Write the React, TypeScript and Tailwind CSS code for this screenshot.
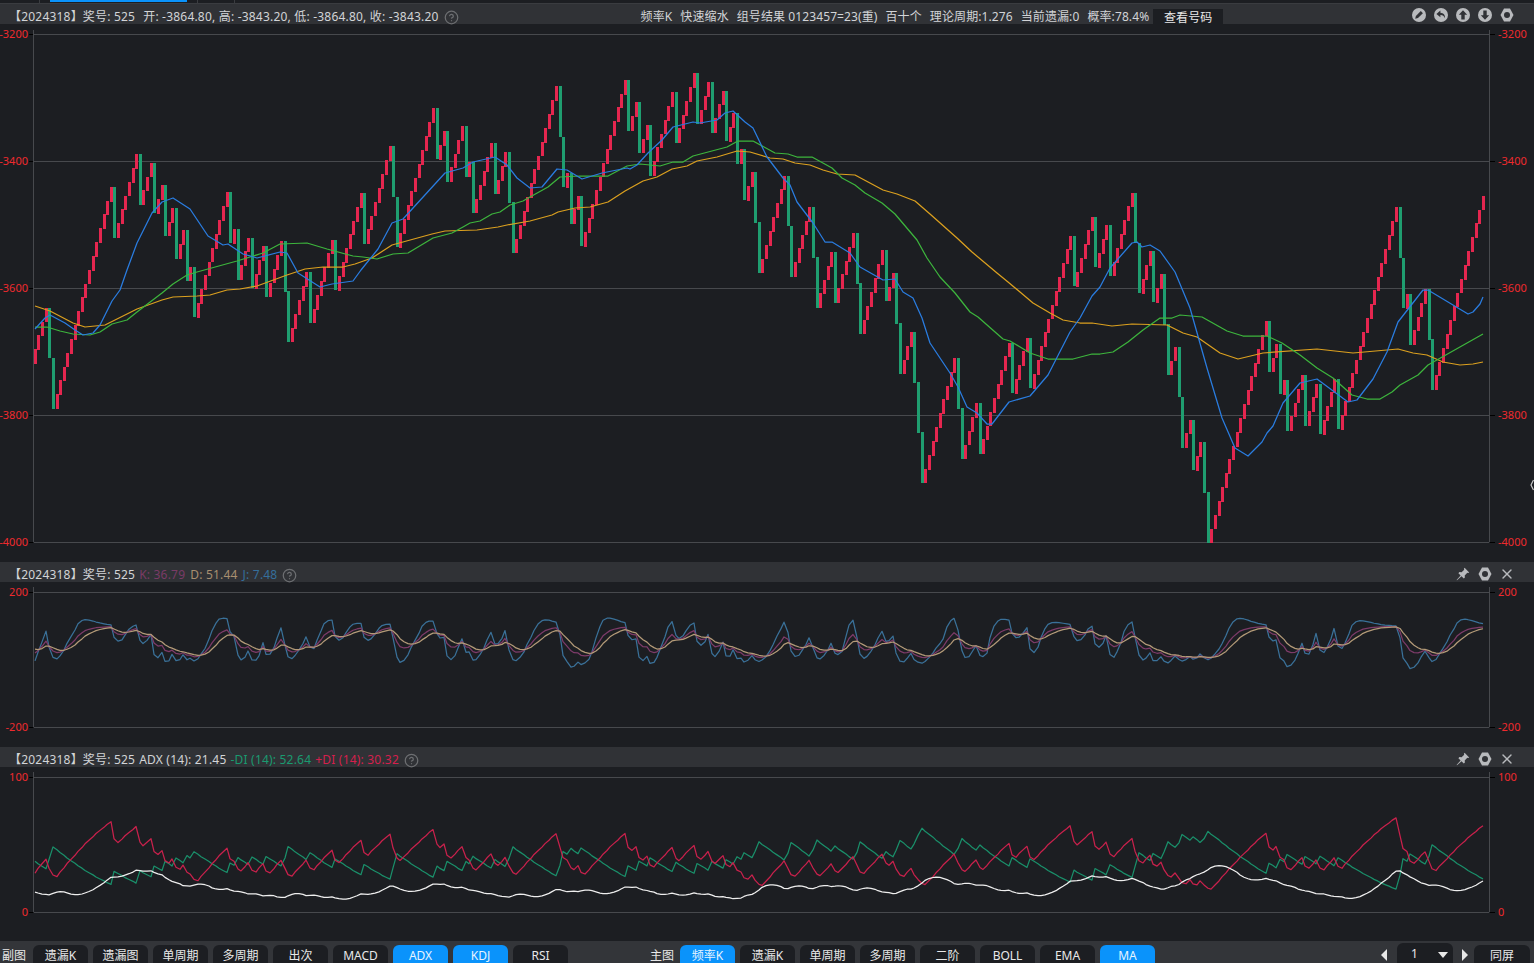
import React from 'react';
import { CircleHelp, X } from 'lucide-react';

type Pt = [number, number];

// renko style runs: [bricks up, bricks down]
const runs: Pt[] = [
  [4, 2], [16, 1], [6, 1], [3, 1], [2, 1], [2, 1], [2, 1], [1, 1], [9, 1], [1, 1], [3, 1], [3, 1], [4, 2], [5, 1], [6, 1], [7, 1],
  [7, 2], [10, 1], [2, 1], [4, 1], [1, 1], [5, 1], [3, 2], [12, 2], [1, 1], [2, 1], [12, 1], [2, 1], [2, 1], [6, 1], [5, 1], [3, 1],
  [3, 1], [2, 1], [1, 1], [2, 2], [7, 2], [5, 2], [4, 1], [5, 2], [6, 1], [2, 2], [3, 3], [9, 2], [4, 1], [8, 1], [4, 1], [11, 1],
  [5, 1], [3, 1], [6, 2], [3, 1], [2, 2], [2, 2], [2, 1], [2, 2], [16, 1], [2, 1], [1, 1], [4, 1], [3, 1], [4, 1], [16, 2], [1, 1],
  [4, 2], [14, 0],
];

type Bar = { x: number; hi: number; lo: number; up: boolean };

const buildBars = () => {
  const bars: Bar[] = [];
  let y = 363;
  let i = 0;
  const xOf = (n: number) => Math.floor(34.3 + 3.62 * n);
  runs.forEach(([u, d]) => {
    for (let k = 0; k < u; k++) {
      bars.push({ x: xOf(i++), hi: y - 13.83, lo: y, up: true });
      y -= 13.83;
    }
    for (let k = 0; k < d; k++) {
      bars.push({ x: xOf(i++), hi: y, lo: y + 50.2, up: false });
      y += 50.2;
    }
  });
  return bars;
};

const bars = buildBars();

// indicators are worked out from the bars, pixel y is inverted price
const calcKdj = () => {
  let k = 20;
  let d = 38;
  const kl: Pt[] = [];
  const dl: Pt[] = [];
  const jl: Pt[] = [];
  const toY = (v: number) => 660 - v * 0.335;
  // range of the bars before the visible window
  const before: Bar = { x: 0, hi: 300, lo: 363, up: false };
  bars.forEach((b, i) => {
    const win = bars.slice(Math.max(0, i - 8), i + 1);
    if (i < 8) win.push(before);
    const top = Math.min(...win.map((w) => w.hi));
    const bot = Math.max(...win.map((w) => w.lo));
    const close = b.up ? b.hi : b.lo;
    const rsv = ((bot - close) / (bot - top)) * 100;
    k = (k * 2 + rsv) / 3;
    d = (d * 2 + k) / 3;
    kl.push([b.x + 1, toY(k)]);
    dl.push([b.x + 1, toY(d)]);
    jl.push([b.x + 1, toY(3 * k - 2 * d)]);
  });
  return { kl, dl, jl };
};

const calcDmi = () => {
  let tr = 280;
  let pdm = 81;
  let mdm = 106;
  let adx = 15;
  const pl: Pt[] = [];
  const ml: Pt[] = [];
  const al: Pt[] = [];
  const toY = (v: number) => 912 - v * 1.34;
  bars.forEach((b, i) => {
    if (i > 0) {
      const p = bars[i - 1];
      const pc = p.up ? p.hi : p.lo;
      const upMove = p.hi - b.hi;
      const downMove = b.lo - p.lo;
      const curTr = Math.max(b.lo - b.hi, Math.abs(b.hi - pc), Math.abs(b.lo - pc));
      tr = tr - tr / 14 + curTr;
      pdm = pdm - pdm / 14 + (upMove > downMove && upMove > 0 ? upMove : 0);
      mdm = mdm - mdm / 14 + (downMove > upMove && downMove > 0 ? downMove : 0);
    }
    const pi = (pdm / tr) * 100;
    const mi = (mdm / tr) * 100;
    const dx = (Math.abs(pi - mi) / (pi + mi)) * 100;
    adx = (adx * 13 + dx) / 14;
    pl.push([b.x + 1, toY(pi)]);
    ml.push([b.x + 1, toY(mi)]);
    al.push([b.x + 1, toY(adx)]);
  });
  return { pl, ml, al };
};

const kdj = calcKdj();
const dmi = calcDmi();

const maBlue: Pt[] = [
  [35, 329], [45, 318], [50, 315], [65, 323], [75, 330], [83, 335], [93, 333], [100, 325], [112, 301], [120, 290], [127, 270], [137, 243],
  [152, 213], [162, 202], [173, 198], [190, 209], [208, 236], [223, 245], [228, 244], [243, 254], [257, 258], [280, 252], [287, 253], [298, 273],
  [320, 287], [332, 284], [353, 281], [361, 270], [378, 249], [392, 223], [403, 219], [445, 173], [463, 168], [473, 162], [495, 157], [507, 165],
  [517, 178], [530, 188], [542, 187], [557, 169], [567, 170], [582, 179], [602, 173], [627, 168], [630, 169], [637, 165], [648, 153], [662, 140],
  [673, 127], [693, 122], [700, 123], [717, 120], [725, 113], [733, 111], [745, 122], [753, 128], [767, 157], [783, 178], [790, 185], [797, 202],
  [813, 223], [825, 242], [832, 242], [850, 253], [860, 267], [883, 280], [895, 279], [903, 292], [913, 298], [922, 318], [930, 343], [950, 373],
  [958, 387], [967, 407], [977, 413], [987, 424], [992, 424], [1009, 402], [1030, 396], [1048, 375], [1070, 332], [1080, 318], [1092, 296], [1100, 287],
  [1110, 268], [1132, 243], [1137, 242], [1142, 247], [1150, 245], [1160, 251], [1175, 272], [1190, 308], [1207, 368], [1222, 418], [1235, 448], [1248, 456],
  [1262, 442], [1267, 433], [1273, 426], [1283, 403], [1300, 383], [1317, 379], [1348, 402], [1357, 400], [1373, 379], [1387, 352], [1398, 322], [1423, 290],
  [1428, 290], [1468, 314], [1473, 312], [1480, 304], [1483, 297],
];

const maGreen: Pt[] = [
  [35, 327], [47, 327], [60, 331], [73, 334], [90, 335], [100, 332], [112, 324], [127, 320], [137, 312], [162, 293], [173, 284], [187, 275],
  [197, 272], [237, 261], [263, 253], [280, 244], [307, 243], [327, 249], [353, 256], [363, 257], [377, 259], [393, 254], [408, 253], [433, 238],
  [452, 233], [463, 227], [470, 223], [480, 221], [492, 214], [500, 212], [510, 205], [523, 201], [530, 197], [548, 187], [560, 177], [580, 176],
  [608, 176], [627, 166], [640, 164], [660, 166], [673, 162], [683, 162], [693, 156], [727, 147], [738, 141], [753, 141], [775, 153], [788, 154],
  [797, 157], [812, 157], [832, 168], [842, 178], [855, 185], [865, 193], [882, 203], [895, 214], [917, 240], [927, 258], [940, 277], [955, 293],
  [970, 312], [978, 317], [1003, 339], [1010, 341], [1030, 353], [1048, 359], [1073, 359], [1092, 354], [1100, 354], [1113, 352], [1128, 342], [1143, 330],
  [1160, 318], [1172, 318], [1180, 315], [1202, 317], [1227, 331], [1243, 336], [1267, 336], [1282, 343], [1300, 355], [1317, 368], [1333, 378], [1352, 395],
  [1367, 399], [1380, 399], [1392, 392], [1400, 385], [1418, 375], [1428, 365], [1483, 334],
];

const maYellow: Pt[] = [
  [35, 306], [50, 311], [73, 323], [85, 327], [105, 325], [137, 309], [162, 300], [173, 297], [197, 296], [210, 295], [227, 290], [240, 289],
  [257, 286], [287, 275], [305, 269], [323, 267], [343, 267], [355, 264], [372, 258], [392, 245], [432, 234], [445, 231], [477, 230], [498, 227],
  [507, 225], [530, 221], [552, 215], [558, 212], [575, 208], [590, 207], [608, 202], [625, 191], [643, 181], [657, 177], [672, 169], [687, 166],
  [697, 161], [717, 157], [737, 151], [750, 152], [770, 158], [783, 159], [795, 163], [810, 165], [823, 170], [837, 174], [855, 175], [883, 190],
  [897, 194], [915, 201], [930, 214], [957, 238], [972, 252], [997, 273], [1008, 282], [1020, 292], [1033, 303], [1050, 313], [1063, 320], [1080, 323],
  [1092, 323], [1112, 326], [1132, 324], [1167, 325], [1183, 333], [1197, 337], [1220, 353], [1238, 359], [1263, 353], [1317, 349], [1353, 353], [1398, 349],
  [1413, 353], [1427, 355], [1443, 362], [1460, 365], [1473, 364], [1483, 362],
];

const Line = ({ pts, color, width = 1.25 }: { pts: Pt[]; color: string; width?: number }) => (
  <polyline points={pts.map((p) => p.join(',')).join(' ')} fill="none" stroke={color} strokeWidth={width} strokeLinejoin="round" />
);

const GRID = '#47494d';

// grid, ticks and scale labels shared by the three panes
const Axes = ({ top, rows }: { top: number; rows: { y: number; label: string }[] }) => (
  <g>
    <g shapeRendering="crispEdges">
      <line x1={33.5} x2={33.5} y1={top} y2={rows[rows.length - 1].y} stroke={GRID} />
      <line x1={1489.5} x2={1489.5} y1={top} y2={rows[rows.length - 1].y} stroke={GRID} />
      {rows.map((r) => (
        <g key={r.y}>
          <line x1={34} x2={1489} y1={r.y + 0.5} y2={r.y + 0.5} stroke={GRID} />
          <line x1={29} x2={33} y1={r.y + 0.5} y2={r.y + 0.5} stroke="#000" />
          <line x1={1490} x2={1495} y1={r.y + 0.5} y2={r.y + 0.5} stroke="#000" />
        </g>
      ))}
    </g>
    {rows.map((r) => (
      <g key={r.label} fill="#ee2a2e" fontSize={11}>
        <text x={28} y={r.y + 4} textAnchor="end">{r.label}</text>
        <text x={1498} y={r.y + 4}>{r.label}</text>
      </g>
    ))}
  </g>
);

const IconDisc = ({ children }: { children: React.ReactNode }) => (
  <svg width="14" height="14" viewBox="0 0 14 14">
    <circle cx="7" cy="7" r="7" fill="#b8babd" />
    {children}
  </svg>
);

const Hex = () => (
  <svg width="14" height="14" viewBox="0 0 14 14">
    <polygon points="4,0.5 10,0.5 13.5,7 10,13.5 4,13.5 0.5,7" fill="#b8babd" />
    <circle cx="7" cy="7" r="3" fill="#303236" />
  </svg>
);

const Pin = () => (
  <svg width="14" height="14" viewBox="0 0 14 14" fill="#b8babd">
    <path d="M8.6 0.8 13.2 5.4 12.2 6.1 11.3 5.8 8.7 8.4 8.9 10.6 7.8 11.6 5.5 9.3 1 13.3 0.6 12.9 4.6 8.4 2.4 6.2 3.4 5.1 5.6 5.3 8.2 2.7 7.9 1.8Z" />
  </svg>
);

const toolIcons = [
  <IconDisc key="pen">
    <path d="M3.2 10.8 3.9 8 8.8 3.1 10.9 5.2 6 10.1Z" fill="#303236" />
  </IconDisc>,
  <IconDisc key="back">
    <path d="M6.4 2.6 2.4 6 6.4 9.2V7.1C8.4 7 10 7.8 11 10.2 11.3 7.2 9.6 4.9 6.4 4.8Z" fill="#303236" />
  </IconDisc>,
  <IconDisc key="up">
    <path d="M7 2.2 11.2 6.8H8.7V11.4H5.3V6.8H2.8Z" fill="#303236" />
  </IconDisc>,
  <IconDisc key="down">
    <path d="M7 11.8 2.8 7.2H5.3V2.6H8.7V7.2H11.2Z" fill="#303236" />
  </IconDisc>,
  <Hex key="set" />,
];

const PaneTools = () => (
  <div className="ml-auto self-center mt-[4px] flex items-center gap-2 pr-[19px]">
    <Pin />
    <Hex />
    <X size={16} strokeWidth={2} className="text-[#b8babd] ml-[-1px]" />
  </div>
);

const Help = () => <CircleHelp size={15} strokeWidth={2} className="text-[#6d6f72] ml-[5px]" />;

const Issue = () => <span>【2024318】奖号: 525</span>;

const ToolButton = ({ label, active }: { label: string; active?: boolean }) => (
  <div
    className={`w-[55px] h-[22px] rounded-t-md flex items-center justify-center pb-[1px] text-xs shrink-0 ${
      active ? 'bg-[#0a93fb] text-[#e6f4ff]' : 'bg-[#1c1e22] text-[#e8e8e8]'
    }`}
  >
    {label}
  </div>
);

const subButtons = [
  { label: '遗漏K' }, { label: '遗漏图' }, { label: '单周期' }, { label: '多周期' }, { label: '出次' },
  { label: 'MACD' }, { label: 'ADX', active: true }, { label: 'KDJ', active: true }, { label: 'RSI' },
];

const mainButtons = [
  { label: '频率K', active: true }, { label: '遗漏K' }, { label: '单周期' }, { label: '多周期' }, { label: '二阶' },
  { label: 'BOLL' }, { label: 'EMA' }, { label: 'MA', active: true },
];

const App = () => {
  return (
    <div
      className="w-full h-screen overflow-hidden flex flex-col bg-[#1c1e22] text-[#d2d4d7] text-xs"
      style={{ fontFamily: '"Noto Sans", "Noto Sans CJK SC", sans-serif' }}
    >
      {/* window tab strip */}
      <div className="h-[4px] shrink-0 flex bg-[#1c1e22] border-b border-[#3a3c40]">
        <div className="w-[40px] border-r border-[#3a3c40]" />
        <div className="ml-[10px] w-[137px] h-[2px] bg-[#0a93fb]" />
        <div className="ml-[10px] w-[38px] border-x border-[#3a3c40]" />
      </div>

      {/* main chart */}
      <div className="h-[20px] shrink-0 flex items-end bg-[#303236] pl-[9px] pr-[20px] leading-[14px] tracking-[0.2px] whitespace-nowrap">
        <div className="flex items-center h-[14px]">
          <Issue />
          <span className="ml-[8px]">开: -3864.80, 高: -3843.20, 低: -3864.80, 收: -3843.20</span>
          <Help />
        </div>
        <div className="flex items-end ml-[182px] tracking-[0.1px]">
          <span>频率K</span>
          <span className="ml-[8px]">快速缩水</span>
          <span className="ml-[8px]">组号结果 0123457=23(重)</span>
          <span className="ml-[8px]">百十个</span>
          <span className="ml-[8px]">理论周期:1.276</span>
          <span className="ml-[8px]">当前遗漏:0</span>
          <span className="ml-[8px]">概率:78.4%</span>
          <div className="ml-[4px] w-[70px] h-[15px] pt-[3px] bg-[#1c1e22] flex items-center justify-center text-[#e8e8e8]">查看号码</div>
        </div>
        <div className="ml-auto self-center mt-[2px] flex items-center gap-2">{toolIcons}</div>
      </div>
      <svg className="shrink-0 block" width="1534" height="538" viewBox="0 24 1534 538">
        <Axes
          top={30}
          rows={[
            { y: 34, label: '-3200' },
            { y: 161, label: '-3400' },
            { y: 288, label: '-3600' },
            { y: 415, label: '-3800' },
            { y: 542, label: '-4000' },
          ]}
        />
        <g shapeRendering="crispEdges">
          {bars.map((b) =>
            b.up ? (
              <rect key={b.x} x={b.x} y={b.hi} width={3} height={14.7} fill="#e5264f" />
            ) : (
              <rect key={b.x} x={b.x} y={b.hi} width={3} height={50.7} fill="#1f9e70" />
            )
          )}
        </g>
        <Line pts={maYellow} color="#dba01f" />
        <Line pts={maGreen} color="#3db53d" />
        <Line pts={maBlue} color="#2a7de1" />
        <path d="M1533.5 480 1531 485 1533.5 490" fill="none" stroke="#c8c8c8" strokeWidth={1.2} />
      </svg>

      {/* KDJ */}
      <div className="h-[20px] shrink-0 flex items-end bg-[#303236] pl-[9px] leading-[14px] tracking-[0.2px] whitespace-nowrap">
        <div className="flex items-center h-[14px]">
          <Issue />
          <span className="ml-[4px] text-[#7a3b66]">K: 36.79</span>
          <span className="ml-[5px] text-[#a88f70]">D: 51.44</span>
          <span className="ml-[5px] text-[#356f9c]">J: 7.48</span>
          <Help />
        </div>
        <PaneTools />
      </div>
      <svg className="shrink-0 block" width="1534" height="165" viewBox="0 582 1534 165">
        <Axes top={587} rows={[{ y: 592, label: '200' }, { y: 727, label: '-200' }]} />
        <Line pts={kdj.jl} color="#3a7199" />
        <Line pts={kdj.kl} color="#7d3b69" />
        <Line pts={kdj.dl} color="#b39a78" />
      </svg>

      {/* ADX */}
      <div className="h-[20px] shrink-0 flex items-end bg-[#303236] pl-[9px] leading-[14px] tracking-[0.2px] whitespace-nowrap">
        <div className="flex items-center h-[14px]">
          <Issue />
          <span className="ml-[4px]">ADX (14): 21.45</span>
          <span className="ml-[4px] text-[#1a9a70]">-DI (14): 52.64</span>
          <span className="ml-[4px] text-[#d5204d]">+DI (14): 30.32</span>
          <Help />
        </div>
        <PaneTools />
      </div>
      <svg className="shrink-0 block" width="1534" height="174" viewBox="0 767 1534 174">
        <Axes top={772} rows={[{ y: 777, label: '100' }, { y: 912, label: '0' }]} />
        <Line pts={dmi.ml} color="#1a8f6a" />
        <Line pts={dmi.pl} color="#c9214c" />
        <Line pts={dmi.al} color="#eeeeee" />
      </svg>

      {/* indicator switches */}
      <div className="flex-1 min-h-0 flex items-start pt-[4px] bg-[#333539] overflow-hidden">
        <span className="w-[33px] pl-[2px] leading-[21px] shrink-0 text-[#e8e8e8]">副图</span>
        <div className="flex gap-[5px]">
          {subButtons.map((b) => (
            <ToolButton key={b.label} label={b.label} active={b.active} />
          ))}
        </div>
        <span className="ml-[82px] w-[30px] leading-[21px] shrink-0 text-[#e8e8e8]">主图</span>
        <div className="flex gap-[5px]">
          {mainButtons.map((b) => (
            <ToolButton key={b.label} label={b.label} active={b.active} />
          ))}
        </div>
        <div className="ml-[226px] flex items-start text-[#e8e8e8]">
          <div className="w-0 h-0 mt-[4px] border-y-[6px] border-y-transparent border-r-[6px] border-r-[#e8e8e8]" />
          <div className="ml-[10px] w-[56px] h-[22px] mt-[-2px] rounded-t-md bg-[#1c1e22] flex items-center pl-[14px] relative">
            1
            <div className="absolute right-[5px] top-[9px] w-0 h-0 border-x-[5px] border-x-transparent border-t-[6px] border-t-[#e8e8e8]" />
          </div>
          <div className="ml-[9px] w-0 h-0 mt-[4px] border-y-[6px] border-y-transparent border-l-[6px] border-l-[#e8e8e8]" />
          <div className="ml-[6px] w-[56px] h-[22px] rounded-t-md bg-[#1c1e22] flex items-center justify-center pb-[1px]">同屏</div>
        </div>
      </div>
    </div>
  );
};

export default App;
